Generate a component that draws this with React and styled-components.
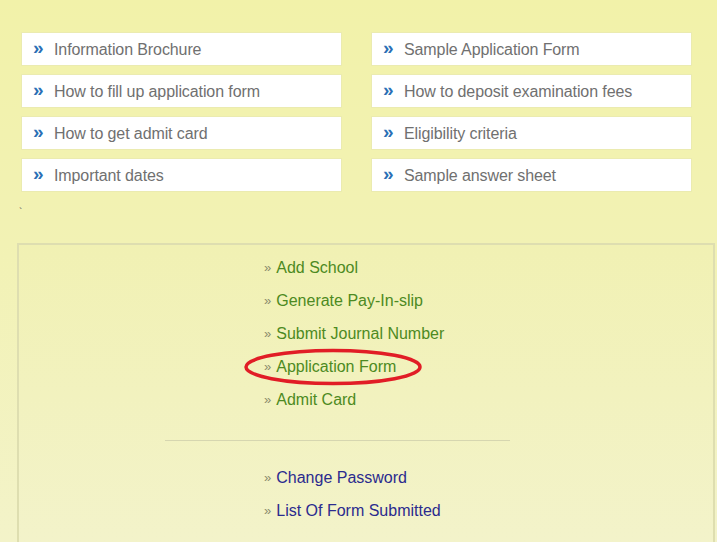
import React from "react"
import styled, { createGlobalStyle } from "styled-components"

const GlobalStyle = createGlobalStyle`
  html, body {
    margin: 0;
    padding: 0;
  }
  body {
    width: 717px;
    height: 542px;
    overflow: hidden;
    font-family: "Liberation Sans", Arial, sans-serif;
    background: linear-gradient(180deg, #f2f2a9 0%, #f2f2b4 45%, #f3f3c9 100%);
  }
`

const Page = styled.div`
  width: 717px;
  height: 542px;
  display: flex;
  flex-direction: column;
`

const LinkGrid = styled.div`
  display: grid;
  grid-template-columns: 321px 321px;
  column-gap: 29px;
  row-gap: 8px;
  padding: 32px 0 0 21px;
`

const InfoButton = styled.a`
  height: 34px;
  display: flex;
  align-items: center;
  box-sizing: border-box;
  background: #fff;
  border: 1px solid #ebebb0;
  padding-left: 11px;
  padding-top: 1px;
  color: #707070;
  font-size: 16px;
  letter-spacing: -0.1px;
  text-decoration: none;
`

const Chevron = styled.span`
  color: #2a6fb5;
  font-weight: bold;
  font-size: 19px;
  width: 21px;
  margin-top: -3px;
`

const Tick = styled.div`
  height: 51px;
  padding-left: 19px;
  font-size: 10px;
  line-height: 42px;
  color: #555;
`

const Panel = styled.div`
  margin-left: 17px;
  width: 698px;
  flex: 1;
  box-sizing: border-box;
  border: 2px solid #dedeb0;
  border-bottom: none;
  padding: 6px 0 0 0;
  background: linear-gradient(180deg, #f1f1b3 0%, #f3f3ca 100%);
`

const Menu = styled.ul`
  list-style: none;
  margin: 0;
  padding: 0 0 0 245px;
`

const MenuItem = styled.li`
  position: relative;
  height: 33px;
  line-height: 33px;
  font-size: 16px;
  color: ${p => (p.$tone === "blue" ? "#2b2b8e" : "#4d8a22")};
`

const Raquo = styled.span`
  font-size: 13px;
  color: #8a8a6c;
  margin-right: 5px;
  position: relative;
  top: -1px;
`

const Circle = styled.svg`
  position: absolute;
  left: -20px;
  top: -3px;
  pointer-events: none;
`

const Divider = styled.hr`
  margin: 24px 0 20px 146px;
  width: 345px;
  border: none;
  border-top: 1px solid #d6d6b0;
  height: 0;
`

const topLinks = [
  "Information Brochure",
  "Sample Application Form",
  "How to fill up application form",
  "How to deposit examination fees",
  "How to get admit card",
  "Eligibility criteria",
  "Important dates",
  "Sample answer sheet",
]

const schoolLinks = [
  "Add School",
  "Generate Pay-In-slip",
  "Submit Journal Number",
  "Application Form",
  "Admit Card",
]

const accountLinks = ["Change Password", "List Of Form Submitted"]

const App = () => {
  return (
    <Page>
      <GlobalStyle />
      <LinkGrid>
        {topLinks.map(label => (
          <InfoButton key={label}>
            <Chevron>»</Chevron>
            {label}
          </InfoButton>
        ))}
      </LinkGrid>
      <Tick>`</Tick>
      <Panel>
        <Menu>
          {schoolLinks.map(label => (
            <MenuItem key={label}>
              {label === "Application Form" && (
                <Circle width="180" height="40" viewBox="0 0 180 40">
                  <ellipse cx="89" cy="20" rx="87" ry="16.5" fill="none" stroke="#e11d26" strokeWidth="3.5" />
                </Circle>
              )}
              <Raquo>»</Raquo>
              {label}
            </MenuItem>
          ))}
        </Menu>
        <Divider />
        <Menu>
          {accountLinks.map(label => (
            <MenuItem key={label} $tone="blue">
              <Raquo>»</Raquo>
              {label}
            </MenuItem>
          ))}
        </Menu>
      </Panel>
    </Page>
  )
}

export default App
